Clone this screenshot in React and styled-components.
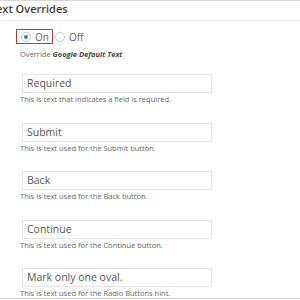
import React from "react";
import styled, { createGlobalStyle } from "styled-components";

const GlobalStyle = createGlobalStyle`
  html, body {
    margin: 0;
    padding: 0;
    background: #fff;
  }
  body {
    font-family: "Open Sans", "Liberation Sans", sans-serif;
    color: #555;
  }
`;

const Page = styled.div`
  width: 300px;
  height: 300px;
  overflow: hidden;
  border-top: 1px solid #d6d6d6;
  box-sizing: border-box;
  position: relative;
`;

const Header = styled.div`
  height: 19px;
  border-bottom: 1px solid #f0f0f0;
  margin-left: -4px;
  font-size: 11px;
  font-weight: 600;
  color: #3f3f3f;
  line-height: 15px;
`;

const Body = styled.div`
  padding: 8px 0 0 20px;
`;

const RadioRow = styled.div`
  display: flex;
  align-items: center;
  height: 15px;
  margin-left: -4px;
`;

const Choice = styled.label`
  display: flex;
  align-items: center;
  gap: 4px;
  height: 13px;
  padding: ${(p) => (p.$focus ? "0 3px 0 4px" : "0")};
  margin-left: ${(p) => (p.$focus ? "0" : "2px")};
  font-size: 10px;
  color: #666;
  border: ${(p) => (p.$focus ? "1.5px solid #d0343e" : "none")};
`;

const Dot = styled.span`
  width: 10px;
  height: 10px;
  border-radius: 50%;
  border: 1px solid #c8c8c8;
  box-sizing: border-box;
  display: flex;
  align-items: center;
  justify-content: center;
  background: #fff;
  &::after {
    content: "";
    width: 4px;
    height: 4px;
    border-radius: 50%;
    background: ${(p) => (p.$on ? "#1e8cbe" : "transparent")};
  }
`;

const Note = styled.div`
  font-size: 7.5px;
  color: #666;
  margin-top: 5px;
  b {
    font-style: italic;
    font-weight: 700;
    color: #444;
  }
`;

const Fields = styled.div`
  display: flex;
  flex-direction: column;
  gap: 18.5px;
  margin-top: 15px;
`;

const Field = styled.div`
  display: flex;
  flex-direction: column;
`;

const Input = styled.div`
  margin-left: 2px;
  width: 190px;
  height: 19px;
  box-sizing: border-box;
  border: 1px solid #e4e4e4;
  font-size: 10.5px;
  line-height: 17px;
  padding-left: 4px;
  color: #555;
`;

const Help = styled.div`
  font-size: 7.5px;
  color: #666;
  margin-top: 2px;
  line-height: 9px;
`;

const Bottom = styled.div`
  position: absolute;
  left: 0;
  right: 0;
  bottom: 1px;
  border-top: 1px solid #d0d0d0;
`;

const fields = [
  ["Required", "This is text that indicates a field is required."],
  ["Submit", "This is text used for the Submit button."],
  ["Back", "This is text used for the Back button."],
  ["Continue", "This is text used for the Continue button."],
  ["Mark only one oval.", "This is text used for the Radio Buttons hint."],
];

const App = () => {
  return (
    <Page>
      <GlobalStyle />
      <Header>ext Overrides</Header>
      <Body>
        <RadioRow>
          <Choice $focus>
            <Dot $on />
            On
          </Choice>
          <Choice>
            <Dot />
            Off
          </Choice>
        </RadioRow>
        <Note>
          Override <b>Google Default Text</b>
        </Note>
        <Fields>
          {fields.map(([value, help]) => (
            <Field key={value}>
              <Input>{value}</Input>
              <Help>{help}</Help>
            </Field>
          ))}
        </Fields>
      </Body>
      <Bottom />
    </Page>
  );
};

export default App;
